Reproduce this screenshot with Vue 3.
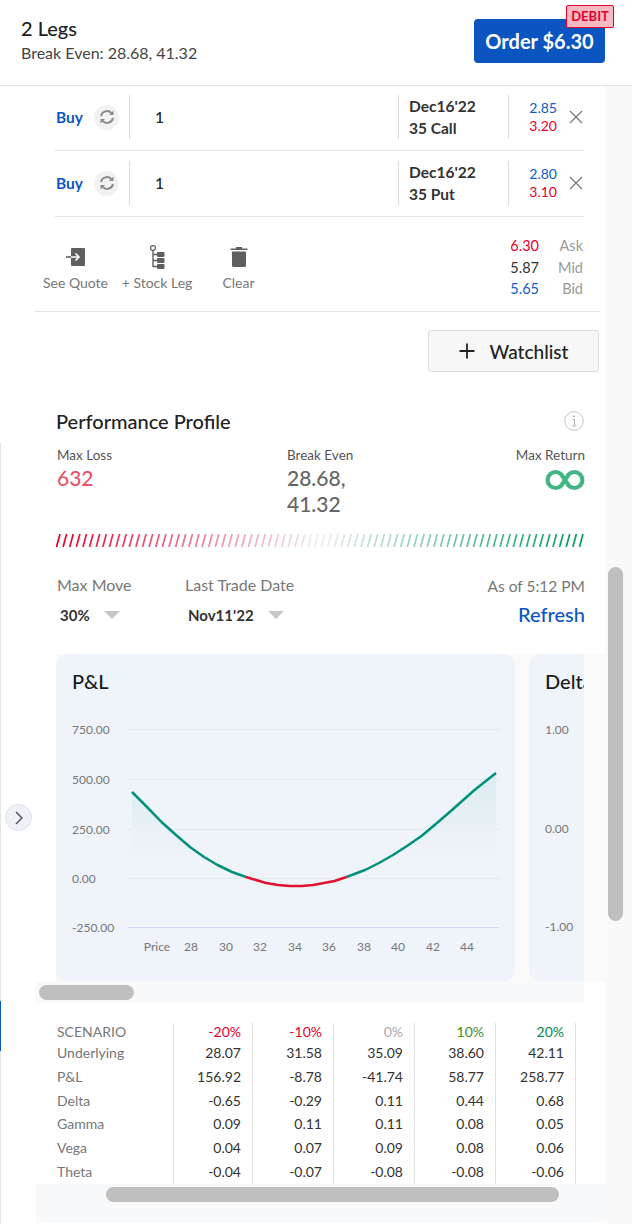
<template>
  <div class="page">
    <header class="top">
      <div>
        <div class="legs-count">2 Legs</div>
        <div class="break-even">Break Even: 28.68, 41.32</div>
      </div>
      <button class="order">
        Order $6.30
        <span class="debit">DEBIT</span>
      </button>
    </header>

    <div class="body">
      <main class="content">
        <section class="legs">
          <div v-for="leg in legs" :key="leg.type" class="leg">
            <div class="side">
              <span class="buy">Buy</span>
              <span class="swap">
                <svg width="16" height="16" viewBox="0 0 16 16" fill="none" stroke="#8a8a8a" stroke-width="2">
                  <path d="M2 7A6 6 0 0 1 12.400 4.200" />
                  <path d="M14 9A6 6 0 0 1 3.600 11.800" />
                  <path d="M14.500 1.500v4.500h-4.500z" fill="#8a8a8a" stroke="none" />
                  <path d="M1.500 14.500V10h4.500z" fill="#8a8a8a" stroke="none" />
                </svg>
              </span>
            </div>
            <div class="qty">1</div>
            <div class="contract">
              <div>Dec16'22</div>
              <div>{{ leg.type }}</div>
            </div>
            <div class="quote">
              <div class="blue">{{ leg.bid }}</div>
              <div class="red">{{ leg.ask }}</div>
            </div>
            <svg class="close" width="16" height="16" viewBox="0 0 16 16" stroke="#777" stroke-width="1.2">
              <path d="M2 2l12 12M14 2L2 14" />
            </svg>
          </div>
        </section>

        <section class="tools">
          <div class="tool">
            <svg width="19" height="24" viewBox="0 0 19 24">
              <path d="M6 3h12a1 1 0 0 1 1 1v16a1 1 0 0 1-1 1H6a1 1 0 0 1-1-1V4a1 1 0 0 1 1-1z" fill="#5f5f5f" />
              <path d="M0 12h5" stroke="#5f5f5f" stroke-width="1.600" />
              <path d="M5 12h8M9.500 8.500L13 12l-3.500 3.500" stroke="#fff" stroke-width="1.600" fill="none" />
            </svg>
            <span>See Quote</span>
          </div>
          <div class="tool">
            <svg width="15" height="24" viewBox="0 0 15 24" fill="none">
              <circle cx="3" cy="3" r="2.400" stroke="#5f5f5f" stroke-width="1.200" />
              <path d="M3 5.500v16.500M3 9.500h5M3 15.500h5M3 21.500h5" stroke="#5f5f5f" stroke-width="1.400" />
              <rect x="7" y="7" width="7.500" height="5" rx="1" fill="#5f5f5f" />
              <rect x="7" y="13" width="7.500" height="5" rx="1" fill="#5f5f5f" />
              <rect x="7" y="19" width="7.500" height="5" rx="1" fill="#5f5f5f" />
            </svg>
            <span>+ Stock Leg</span>
          </div>
          <div class="tool">
            <svg width="18" height="24" viewBox="0 0 18 24">
              <path d="M0.500 3.500h17V5H0.500zM6 2h6v2H6z" fill="#5f5f5f" />
              <path d="M2 6.500h14V20.500a1.500 1.500 0 0 1-1.500 1.500h-11A1.500 1.500 0 0 1 2 20.500z" fill="#5f5f5f" />
            </svg>
            <span>Clear</span>
          </div>
          <div class="nbbo">
            <template v-for="p in nbbo" :key="p.label">
              <span :class="p.cls">{{ p.value }}</span>
              <span class="nbbo-label">{{ p.label }}</span>
            </template>
          </div>
        </section>

        <div class="watch-row">
          <button class="watch">
            <svg width="16" height="16" viewBox="0 0 16 16" stroke="#222" stroke-width="1.800">
              <path d="M8 0.500v15M0.500 8h15" />
            </svg>
            Watchlist
          </button>
        </div>

        <section class="profile">
          <div class="profile-head">
            <h2>Performance Profile</h2>
            <svg width="20" height="20" viewBox="0 0 20 20" fill="none">
              <circle cx="10" cy="10" r="9.300" stroke="#c4c4c4" />
              <path d="M8.300 8.500h2.200v6.500M8.200 15h4.200" stroke="#b5b5b5" stroke-width="1.100" />
              <circle cx="10" cy="5.500" r="1.100" fill="#b5b5b5" />
            </svg>
          </div>
          <div class="stats">
            <div class="stat stat-loss">
              <div class="stat-label">Max Loss</div>
              <div class="stat-value loss">632</div>
            </div>
            <div class="stat stat-mid">
              <div class="stat-label">Break Even</div>
              <div class="stat-value">28.68,<br />41.32</div>
            </div>
            <div class="stat stat-end">
              <div class="stat-label">Max Return</div>
              <svg class="infinity" width="40" height="22" viewBox="0 0 40 22" fill="none" stroke="#41b683" stroke-width="4.200">
                <path d="M16.200 16.700L23.800 5.300A8 8 0 1 1 23.800 16.700L16.200 5.300A8 8 0 1 0 16.200 16.700Z" />
              </svg>
            </div>
          </div>
          <svg class="stripes" width="529" height="13" viewBox="0 0 529 13">
            <line
              v-for="s in stripes"
              :key="s.x"
              :x1="s.x"
              y1="13"
              :x2="s.x + 3.500"
              y2="0"
              :stroke="s.color"
              stroke-width="1.700"
            />
          </svg>
          <div class="controls">
            <div class="control control-move">
              <div class="control-label">Max Move</div>
              <div class="select">30%<i class="caret"></i></div>
            </div>
            <div class="control">
              <div class="control-label">Last Trade Date</div>
              <div class="select">Nov11'22<i class="caret"></i></div>
            </div>
            <div class="refresh-box">
              <div class="as-of">As of 5:12 PM</div>
              <div class="refresh">Refresh</div>
            </div>
          </div>
        </section>

        <section class="charts-wrap">
          <div class="charts">
            <div class="chart-card">
              <h3>P&amp;L</h3>
              <svg class="plot" width="459" height="269" viewBox="56 713 459 269">
                <defs>
                  <linearGradient id="area" gradientUnits="userSpaceOnUse" x1="0" y1="774" x2="0" y2="857">
                    <stop offset="0" stop-color="#dcecee" />
                    <stop offset="1" stop-color="#eff3fa" />
                  </linearGradient>
                </defs>
                <line
                  v-for="g in grid"
                  :key="g.y"
                  x1="128"
                  x2="499"
                  :y1="g.y + 0.500"
                  :y2="g.y + 0.500"
                  :stroke="g.y === 927 ? '#cfdcef' : '#e4e8ee'"
                />
                <path :d="areaPath" fill="url(#area)" />
                <polyline :points="lineLeft" class="curve" stroke="#00907a" />
                <polyline :points="lineRight" class="curve" stroke="#00907a" />
                <polyline :points="lineMid" class="curve" stroke="#e0102f" />
                <text v-for="g in grid" :key="g.label" x="72" :y="g.y + 4.500" class="tick">{{ g.label }}</text>
                <text v-for="t in ticks" :key="t.label" :x="t.x" y="951" text-anchor="middle" class="tick">{{ t.label }}</text>
              </svg>
            </div>
            <div class="chart-card delta">
              <h3>Delta</h3>
              <div class="delta-ticks">
                <span>1.00</span>
                <span>0.00</span>
                <span>-1.00</span>
              </div>
            </div>
          </div>
        </section>
        <div class="track-one"><i></i></div>

        <section class="scenario">
          <div class="scen-row scen-head">
            <div class="scen-name">SCENARIO</div>
            <div v-for="h in heads" :key="h.t" class="scen-cell" :style="{ color: h.c }">{{ h.t }}</div>
          </div>
          <div v-for="r in rows" :key="r.name" class="scen-row">
            <div class="scen-name">{{ r.name }}</div>
            <div v-for="(v, i) in r.vals" :key="i" class="scen-cell">{{ v }}</div>
          </div>
        </section>
        <div class="track-two"><i></i></div>
      </main>

      <aside class="gutter"><i></i></aside>
    </div>

    <span class="edge"></span>
    <span class="edge-blue"></span>
    <button class="expand">
      <svg width="8" height="14" viewBox="0 0 8 14" fill="none" stroke="#555" stroke-width="1.500">
        <path d="M1 1l6 6-6 6" />
      </svg>
    </button>
  </div>
</template>

<script setup>
const legs = [
  { type: '35 Call', bid: '2.85', ask: '3.20' },
  { type: '35 Put', bid: '2.80', ask: '3.10' },
]

const nbbo = [
  { value: '6.30', label: 'Ask', cls: 'red' },
  { value: '5.87', label: 'Mid', cls: 'dark' },
  { value: '5.65', label: 'Bid', cls: 'blue' },
]

// red -> pale -> green across the bar
function mix(a, b, t) {
  return a.map((v, i) => Math.round(v + (b[i] - v) * t))
}
const stripes = Array.from({ length: 80 }, (_, i) => {
  const t = i / 79
  const rgb = t < 0.5
    ? mix([228, 0, 43], [238, 240, 246], t * 2)
    : mix([238, 240, 246], [0, 158, 90], (t - 0.5) * 2)
  return { x: 0.5 + i * 6.62, color: `rgb(${rgb.join(',')})` }
})

const grid = [
  { y: 729, label: '750.00' },
  { y: 779, label: '500.00' },
  { y: 829, label: '250.00' },
  { y: 878, label: '0.00' },
  { y: 927, label: '-250.00' },
]

const ticks = [
  { x: 157, label: 'Price' },
  { x: 191, label: '28' },
  { x: 226, label: '30' },
  { x: 260, label: '32' },
  { x: 295, label: '34' },
  { x: 329, label: '36' },
  { x: 364, label: '38' },
  { x: 398, label: '40' },
  { x: 433, label: '42' },
  { x: 467, label: '44' },
]

const lineLeft = '132,792 147,807 161.500,822 176,835 190,847 204,857 217.500,865 232,872 246,877'
const lineMid = '246,877 256,880 266,883 278,885 290,886 302,886 313,885 324,883 334.500,881 346.500,877'
const lineRight = '346.500,877 365,870 379,863 393,855 407,846 421.500,836 437,823 452,810 474.500,790 496,773'
const areaPath = 'M132 792L147 807L161.500 822L176 835L190 847L204 857H404L421.500 836L437 823L452 810L474.500 790L496 773V857H132Z'

const heads = [
  { t: '-20%', c: '#e4002b' },
  { t: '-10%', c: '#e4002b' },
  { t: '0%', c: '#aaaaaa' },
  { t: '10%', c: '#3f8f1f' },
  { t: '20%', c: '#00884f' },
]

const rows = [
  { name: 'Underlying', vals: ['28.07', '31.58', '35.09', '38.60', '42.11'] },
  { name: 'P&L', vals: ['156.92', '-8.78', '-41.74', '58.77', '258.77'] },
  { name: 'Delta', vals: ['-0.65', '-0.29', '0.11', '0.44', '0.68'] },
  { name: 'Gamma', vals: ['0.09', '0.11', '0.11', '0.08', '0.05'] },
  { name: 'Vega', vals: ['0.04', '0.07', '0.09', '0.08', '0.06'] },
  { name: 'Theta', vals: ['-0.04', '-0.07', '-0.08', '-0.08', '-0.06'] },
]
</script>

<style>
html, body {
  margin: 0;
  background: #fff;
}
</style>

<style scoped>
.page {
  position: relative;
  width: 632px;
  height: 1224px;
  overflow: hidden;
  background: #fff;
  font-family: Lato, "Open Sans", sans-serif;
  color: #222;
}
.top {
  height: 86px;
  box-sizing: border-box;
  border-bottom: 1px solid #e4e4e4;
  padding: 15px 27px 0 21px;
  display: flex;
  justify-content: space-between;
}
.legs-count {
  font-size: 20px;
  line-height: 26px;
  font-weight: 500;
}
.break-even {
  font-size: 16px;
  line-height: 24px;
  color: #444;
}
.order {
  position: relative;
  width: 131px;
  height: 44px;
  margin-top: 4px;
  border: 0;
  border-radius: 4px;
  background: #0a55bf;
  color: #fff;
  font: 700 20px Lato, sans-serif;
}
.debit {
  position: absolute;
  top: -14px;
  right: -9px;
  width: 48px;
  height: 23px;
  box-sizing: border-box;
  border: 1px solid #e4002b;
  border-radius: 2px;
  background: #f6b9c2;
  color: #e4002b;
  font-size: 13px;
  line-height: 21px;
  font-weight: 700;
  text-align: center;
}
.body {
  display: flex;
  height: 1138px;
}
.content {
  width: 605px;
  flex: none;
}
.gutter {
  flex: 1;
  background: #f9f9f9;
  padding: 481px 0 0 3px;
}
.gutter i {
  display: block;
  width: 15px;
  height: 354px;
  border-radius: 8px;
  background: #bfbfbf;
}
.legs {
  margin: 0 21px 0 55px;
}
.leg {
  height: 65px;
  box-sizing: border-box;
  border-bottom: 1px solid #e2e2e2;
  display: flex;
  align-items: center;
  padding-bottom: 2px;
}
.leg + .leg {
  height: 66px;
  padding-bottom: 1px;
}
.side {
  width: 74px;
  flex: none;
  display: flex;
  align-items: center;
  justify-content: space-between;
  padding: 0 10px 0 1px;
  box-sizing: border-box;
}
.buy {
  color: #0a55bf;
  font-size: 15.500px;
  font-weight: 700;
}
.swap {
  width: 25px;
  height: 25px;
  border-radius: 50%;
  background: #f2f2f2;
  display: flex;
  align-items: center;
  justify-content: center;
}
.qty, .contract, .quote {
  height: 44px;
  border-left: 1px solid #dcdcdc;
  box-sizing: border-box;
}
.qty {
  flex: 1;
  padding-left: 25px;
  font-size: 15.500px;
  font-weight: 500;
  line-height: 44px;
}
.contract {
  width: 110px;
  flex: none;
  padding-left: 10px;
  font-size: 15.500px;
  font-weight: 700;
  line-height: 22px;
  color: #333;
}
.quote {
  width: 49px;
  flex: none;
  text-align: right;
  font-size: 14px;
  line-height: 18px;
  padding-top: 4px;
}
.close {
  margin-left: 11px;
}
.blue { color: #0f5cc9; }
.red { color: #e4002b; }
.dark { color: #333; }
.tools {
  position: relative;
  height: 95px;
  box-sizing: border-box;
  margin: 0 5px 0 35px;
  border-bottom: 1px solid #e2e2e2;
  display: flex;
  gap: 0.500px;
  font-size: 14px;
  color: #777;
}
.tool {
  width: 81px;
  display: flex;
  flex-direction: column;
  align-items: center;
  padding-top: 28px;
  height: 67px;
}
.tool svg {
  display: block;
  height: 24px;
  margin-bottom: 4px;
}
.tool span {
  line-height: 20px;
}
.nbbo {
  margin-left: auto;
  margin-right: 17px;
  margin-top: 18px;
  display: grid;
  grid-template-columns: auto 44px;
  grid-auto-rows: 21.500px;
  font-size: 14.500px;
  line-height: 21px;
  text-align: right;
}
.nbbo-label {
  color: #999;
}
.watch-row {
  display: flex;
  justify-content: flex-end;
  padding: 18px 6px 0 0;
}
.watch {
  width: 171px;
  height: 42px;
  box-sizing: border-box;
  border: 1px solid #dcdcdc;
  border-radius: 3px;
  background: #f7f7f7;
  color: #222;
  font: 500 19px Lato, sans-serif;
  display: flex;
  align-items: center;
  justify-content: center;
  gap: 15px;
}
.profile {
  margin: 0 20px 0 57px;
}
.profile-head {
  height: 22px;
  margin-top: 38px;
  margin-left: -1px;
  display: flex;
  align-items: center;
  justify-content: space-between;
  padding-right: 1px;
}
h2 {
  margin: 0;
  font-size: 20px;
  font-weight: 500;
  color: #222;
}
.stats {
  margin-top: 13px;
  display: flex;
  height: 79px;
}
.stat-loss {
  width: 230px;
}
.stat-mid {
  flex: 1;
}
.stat-end {
  text-align: right;
}
.stat-label {
  font-size: 13.500px;
  line-height: 20px;
  color: #555;
}
.stat-value {
  font-size: 21px;
  line-height: 26px;
  font-weight: 500;
  color: #666;
}
.loss {
  color: #e85467;
}
.infinity {
  display: block;
  margin: 4px 0 0 auto;
}
.stripes {
  display: block;
  margin: 10px 0 0 -1px;
}
.controls {
  margin-top: 27px;
  display: flex;
  align-items: flex-start;
}
.control-move {
  width: 128px;
}
.control-label {
  font-size: 16px;
  line-height: 22px;
  color: #777;
}
.select {
  margin: 8px 0 0 3px;
  font-size: 15px;
  line-height: 22px;
  font-weight: 700;
  color: #333;
  display: flex;
  align-items: center;
}
.caret {
  width: 0;
  height: 0;
  border-left: 8px solid transparent;
  border-right: 8px solid transparent;
  border-top: 8px solid #c6c6c6;
  margin-left: 14px;
}
.refresh-box {
  margin-left: auto;
  text-align: right;
}
.as-of {
  font-size: 15.500px;
  line-height: 22px;
  margin-top: 1px;
  color: #777;
}
.refresh {
  margin-top: 5px;
  font-size: 20px;
  line-height: 24px;
  color: #0a55bf;
  font-weight: 500;
}
.charts-wrap {
  width: 549px;
  height: 328px;
  margin: 28px 0 0 56px;
  background: #fafafa;
}
.charts {
  width: 528px;
  height: 100%;
  display: flex;
  gap: 14px;
  overflow: hidden;
}
.chart-card {
  position: relative;
  width: 459px;
  flex: none;
  border-radius: 12px;
  background: #eff3fa;
}
h3 {
  margin: 0;
  padding: 14px 0 0 16px;
  font-size: 20px;
  line-height: 26px;
  font-weight: 500;
  color: #1a1a1a;
}
.plot {
  position: absolute;
  left: 0;
  top: 59px;
}
.curve {
  fill: none;
  stroke-width: 2.500;
  stroke-linejoin: round;
}
.tick {
  font-family: Lato, sans-serif;
  font-size: 12px;
  fill: #777;
}
.delta-ticks {
  position: absolute;
  left: 16px;
  top: 68px;
  height: 213px;
  display: flex;
  flex-direction: column;
  justify-content: space-between;
  font-size: 12px;
  line-height: 16px;
  color: #777;
}
.track-one {
  width: 548px;
  height: 21px;
  margin-left: 36px;
  background: #f8f9fa;
  box-sizing: border-box;
  padding: 3px 0 0 3px;
}
.track-one i {
  display: block;
  width: 95px;
  height: 15px;
  border-radius: 8px;
  background: #bfbfbf;
}
.scenario {
  width: 569px;
  height: 181px;
  box-sizing: border-box;
  margin-left: 36px;
  padding: 20px 0 0 21px;
  background: #fff;
}
.scen-row {
  display: grid;
  grid-template-columns: 116px 79px repeat(4, 81px);
  height: 23.800px;
  font-size: 14px;
  line-height: 24px;
  color: #333;
}
.scen-head {
  height: 18px;
  line-height: 17px;
}
.scen-name {
  color: #777;
}
.scen-cell {
  text-align: right;
  padding-right: 11px;
  border-left: 1px solid #e0e0e0;
}
.scen-cell:last-child {
  border-right: 1px solid #e0e0e0;
}
.track-two {
  width: 569px;
  height: 39px;
  margin-left: 36px;
  background: #f8f9fa;
  box-sizing: border-box;
  padding: 3px 0 0 70px;
}
.track-two i {
  display: block;
  width: 453px;
  height: 15px;
  border-radius: 8px;
  background: #bfbfbf;
}
.edge {
  position: absolute;
  left: 0;
  top: 443px;
  bottom: 0;
  width: 1px;
  background: #e4e4e4;
}
.edge-blue {
  position: absolute;
  left: 0;
  top: 1001px;
  height: 50px;
  width: 1px;
  background: #0a55bf;
}
.expand {
  position: absolute;
  left: 5px;
  top: 804px;
  width: 27px;
  height: 27px;
  padding: 0;
  border: 1px solid #dde1ec;
  border-radius: 50%;
  background: #eef1f8;
  display: flex;
  align-items: center;
  justify-content: center;
}
</style>
